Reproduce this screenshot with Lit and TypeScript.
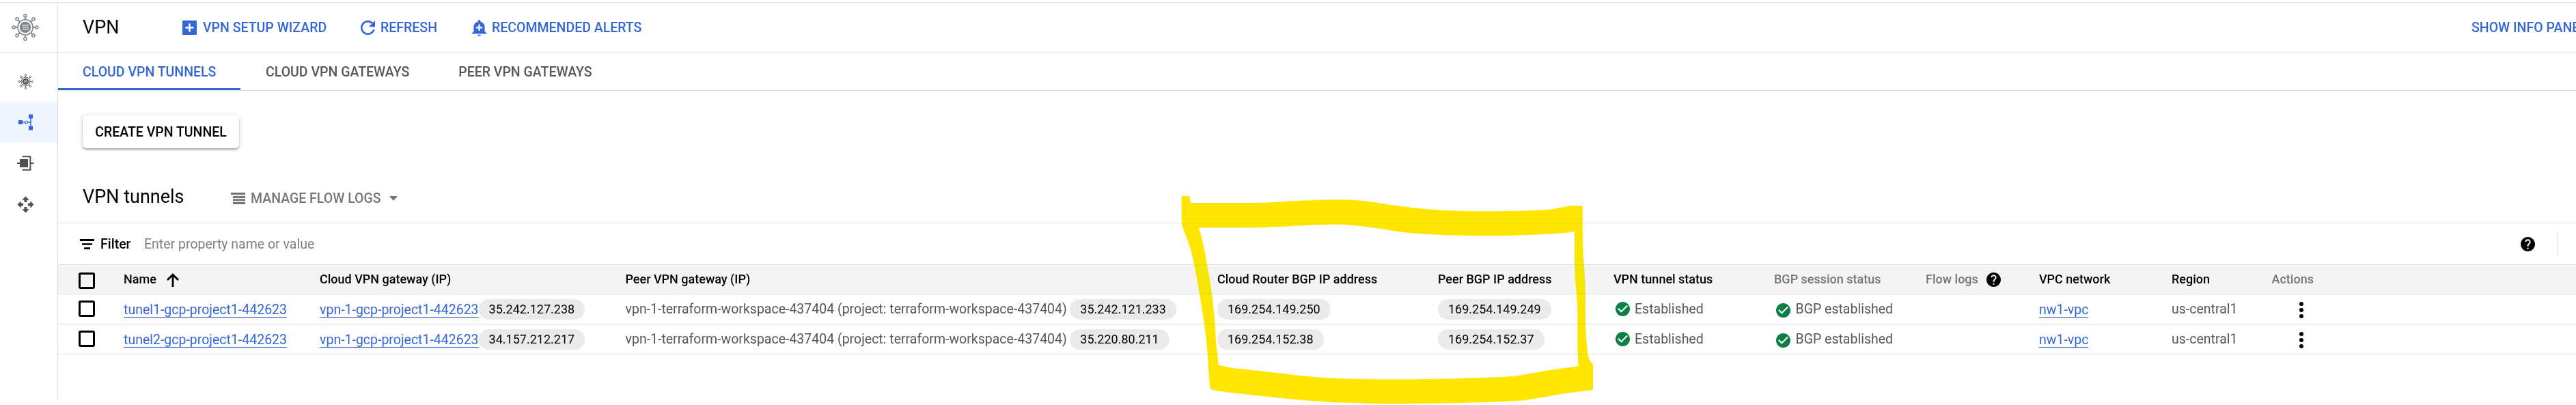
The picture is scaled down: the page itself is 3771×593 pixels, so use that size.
import { LitElement, html, css, svg } from "lit";
import { customElement } from "lit/decorators.js";

interface Tunnel {
  name: string;
  gateway: string;
  gatewayIp: string;
  peer: string;
  peerIp: string;
  routerBgp: string;
  peerBgp: string;
  network: string;
  region: string;
}

const PEER = "vpn-1-terraform-workspace-437404 (project: terraform-workspace-437404)";

const TUNNELS: Tunnel[] = [
  { name: "tunel1-gcp-project1-442623", gateway: "vpn-1-gcp-project1-442623", gatewayIp: "35.242.127.238", peer: PEER, peerIp: "35.242.121.233", routerBgp: "169.254.149.250", peerBgp: "169.254.149.249", network: "nw1-vpc", region: "us-central1" },
  { name: "tunel2-gcp-project1-442623", gateway: "vpn-1-gcp-project1-442623", gatewayIp: "34.157.212.217", peer: PEER, peerIp: "35.220.80.211", routerBgp: "169.254.152.38", peerBgp: "169.254.152.37", network: "nw1-vpc", region: "us-central1" },
];

const SPOKES = [0, 45, 90, 135, 180, 225, 270, 315];

const hub = (size: number) => html`<svg class="hub" width=${size} height=${size} viewBox="-20 -20 40 40">
  <circle r="11.2" fill="none" stroke="currentColor" stroke-width="1.6"/>
  <circle r="8.2" fill="currentColor"/>
  <path d="M-4.5 -3H5M-4.5 0H5M-4.5 3H5" stroke="#fff" stroke-width="1"/>
  ${SPOKES.map((a) => svg`<g transform=${`rotate(${a})`}><path d="M0 -11V-14.6" stroke="currentColor" stroke-width="1.8"/><circle cy="-16.9" r="2.1" fill="none" stroke="currentColor" stroke-width="1.5"/></g>`)}
</svg>`;

const tunnelIcon = html`<svg width="22" height="24" viewBox="0 0 22 24">
  <path d="M5 12H18M18 4V20" fill="none" stroke="currentColor" stroke-width="1.5"/>
  <path d="M0 9H6V15H0zM15 .5H21V6.5H15zM15 17.5H21V23.5H15z" fill="currentColor"/>
  <circle cx="11.5" cy="12" r="2" fill="#fff" stroke="currentColor" stroke-width="1.1"/>
</svg>`;

const gatewayIcon = html`<svg width="25" height="23" viewBox="0 0 25 23">
  <path d="M7.5 1.2H19.4V20.8H7.5M0 11H5M20 11H24.5" fill="none" stroke="currentColor" stroke-width="2"/>
  <path d="M4 5H16V17H4z" fill="currentColor"/>
</svg>`;

const moveIcon = html`<svg width="25" height="25" viewBox="-12.5 -12.5 25 25">
  ${[0, 90, 180, 270].map((a) => svg`<path transform=${`rotate(${a})`} fill="currentColor" d="M0 -12L5.3 -6.8H2V-3.4H-2V-6.8H-5.3z"/>`)}
</svg>`;

const addBox = html`<svg width="21" height="21" viewBox="3 3 18 18"><path fill="currentColor" d="M19.9 3H4.1C3.5 3 3 3.5 3 4.1v15.8c0 .6.5 1.1 1.1 1.1h15.8c.6 0 1.1-.5 1.1-1.1V4.1c0-.6-.5-1.1-1.1-1.1zM17.200 13.100h-4.100v4.100h-2.200v-4.100H6.800v-2.200h4.100V6.800h2.200v4.100h4.100v2.200z"/></svg>`;
const refresh = html`<svg width="21" height="21" viewBox="4 4 16 16"><path fill="currentColor" d="M17.650 6.350C16.200 4.900 14.210 4 12 4c-4.420 0-7.990 3.580-7.990 8s3.570 8 7.990 8c3.730 0 6.840-2.550 7.730-6h-2.080c-.820 2.330-3.040 4-5.650 4-3.310 0-6-2.690-6-6s2.690-6 6-6c1.660 0 3.140.690 4.220 1.780L13 11h7V4l-2.350 2.350z"/></svg>`;
const bell = html`<svg width="21" height="24" viewBox="3 2 18 21" preserveAspectRatio="none"><path fill="currentColor" d="M10.010 21.010c0 1.100.890 1.990 1.990 1.990s1.990-.890 1.990-1.990h-3.980zm8.870-4.190V11c0-3.250-2.250-5.970-5.290-6.690v-.720C13.590 2.710 12.880 2 12 2s-1.590.710-1.590 1.590v.720C7.370 5.030 5.120 7.750 5.120 11v5.820L3 18.940V20h18v-1.060l-2.120-2.120zM16 13.010h-3v3h-2v-3H8V11h3V8h2v3h3v2.010z"/></svg>`;
const logsIcon = html`<svg width="21" height="17" viewBox="0 0 21 17"><path fill="currentColor" d="M0 0H21V3.200H0zM3 5H21V8H3zM3 9.300H21V12.200H3zM3 14H21V17H3z"/></svg>`;
const filterIcon = html`<svg width="21" height="15" viewBox="0 0 21 15"><path fill="currentColor" d="M0 0H21V3H0zM3 6.200H18V8.800H3zM6.200 12.200H15V15H6.200z"/></svg>`;
const sortArrow = html`<svg class="sort" width="18" height="20" viewBox="0 0 18 20"><path fill="none" stroke="currentColor" stroke-width="2.800" d="M9 20V2.200M1 10L9 2L17 10"/></svg>`;
const check = html`<svg class="ok" width="21" height="21" viewBox="2 2 20 20"><path fill="currentColor" d="M12 2C6.480 2 2 6.480 2 12s4.480 10 10 10 10-4.480 10-10S17.520 2 12 2zm-2 15l-5-5 1.410-1.410L10 14.170l7.590-7.590L19 8l-9 9z"/></svg>`;
const help = html`<svg class="help" width="21" height="21" viewBox="2 2 20 20"><path fill="currentColor" d="M12 2C6.480 2 2 6.480 2 12s4.480 10 10 10 10-4.480 10-10S17.520 2 12 2zm1 17h-2v-2h2v2zm2.070-7.750l-.9.920C13.450 12.900 13 13.500 13 15h-2v-.5c0-1.100.450-2.100 1.170-2.830l1.240-1.260c.370-.360.590-.860.590-1.410 0-1.100-.9-2-2-2s-2 .9-2 2H8c0-2.210 1.790-4 4-4s4 1.790 4 4c0 .880-.360 1.680-.930 2.250z"/></svg>`;
const more = html`<svg class="more" width="6" height="24" viewBox="0 0 6 24"><circle cx="3" cy="3" r="3"/><circle cx="3" cy="12" r="3"/><circle cx="3" cy="21" r="3"/></svg>`;

@customElement("app-root")
class AppRoot extends LitElement {
  static styles = css`
    :host {
      display: block;
      position: relative;
      height: 593px;
      overflow: hidden;
      background: #fff;
      color: #000;
      font: 400 19.5px/24px Roboto, sans-serif;
      white-space: nowrap;
    }
    * { box-sizing: border-box; }
    svg { display: block; flex: none; }
    .frame { display: flex; height: 585px; padding-top: 3px; }
    .rail { flex: none; width: 85px; border-right: 1px solid #e0e0e0; border-top: 1px solid #e0e0e0; color: #505050; }
    .rail-head { height: 73px; border-bottom: 1px solid #e0e0e0; color: #80868b; display: flex; align-items: center; padding-left: 17px; margin-bottom: 12px; }
    .rail-item { height: 60px; display: flex; align-items: center; justify-content: center; padding-right: 9px; }
    .rail-item.on { background: #f0f5fe; color: #3367d6; }
    .main { flex: 1; min-width: 0; border-top: 1px solid #e0e0e0; }
    .bar { height: 74px; border-bottom: 1px solid #e0e0e0; padding-left: 36px; display: flex; align-items: center; color: #3367d6; font-weight: 500; }
    .bar h1, .section h2 { margin: 0; font-size: 27px; font-weight: 400; color: #000; line-height: 32px; }
    .bar h1 { width: 146px; padding-bottom: 1px; }
    .act { display: flex; align-items: center; gap: 9px; }
    .act.wizard { width: 261px; }
    .act.refresh { width: 163px; gap: 8px; }
    .act.alerts { gap: 8px; }
    .info { margin-left: auto; width: 153px; }
    .tabs { height: 55px; border-bottom: 1px solid #e0e0e0; display: flex; color: #575757; font-weight: 500; }
    .tab { padding: 2px 36px 0; display: flex; align-items: center; height: 54px; }
    .tab.on { color: #3367d6; border-bottom: 3px solid #3367d6; padding-top: 5px; width: 267px; margin-right: 1px; }
    .create { margin: 36px 0 0 36px; padding-top: 2px; height: 48px; width: 229px; border-radius: 5px; display: flex; align-items: center; justify-content: center; font-weight: 500; box-shadow: 0 2px 2px rgba(0,0,0,.26), 0 1px 7px rgba(0,0,0,.18); }
    .section { height: 110px; padding: 33px 0 0 36px; display: flex; align-items: center; border-bottom: 1px solid #e0e0e0; }
    .section h2 { width: 217px; }
    .flow { display: flex; align-items: center; gap: 8px; color: #757575; font-weight: 500; padding-top: 5px; }
    .caret { border: 6.500px solid transparent; border-top: 7px solid #757575; border-bottom: 0; margin-left: 4px; }
    .filter { height: 61px; border-bottom: 1px solid #e0e0e0; padding: 1px 0 0 32px; display: flex; align-items: center; }
    .filter b { font-weight: 500; width: 64px; margin-left: 9px; }
    .ph { color: #808080; }
    .filter .help { margin-left: auto; margin-right: 32px; }
    .rule { width: 1px; height: 36px; background: #e0e0e0; margin-right: 27px; margin-bottom: 1px; }
    .row { display: grid; grid-template-columns: 30px 66px 287px 447.500px 866.500px 323px 257px 235px 222px 166px 194px 146.500px 1fr; height: 44px; border-bottom: 1px solid #e0e0e0; align-items: center; color: #575757; }
    .row > div { display: flex; align-items: center; }
    .row.head { height: 43px; background: #f4f4f4; font-size: 18px; font-weight: 500; color: #000; padding-top: 0; }
    .head > .dim { color: #757575; }
    .box { width: 24px; height: 24px; border: 3px solid #000; border-radius: 3px; margin-top: -1px; }
    .head .box { margin-top: 4px; }
    .sort { margin-left: 15px; margin-top: 2px; }
    .head .help { margin-left: 12px; margin-top: 1px; color: #000; }
    a { color: #3367d6; line-height: 21px; border-bottom: 1px solid #3367d6; margin-top: 3px; }
    .chip { height: 30px; border-radius: 15px; background: #eaeaea; color: #000; font-size: 18px; line-height: 30px; padding: 0 15px; margin-top: 1px; }
    .peer .chip { margin-left: 4.500px; }
    .ok { color: #0b8043; margin: 0 7px 0 3px; }
    .ok-low .ok { margin: 4px 7.500px 0 3px; }
    .more { margin-left: 40px; margin-top: 3px; }
    .marker { position: absolute; left: 0; top: 0; mix-blend-mode: darken; pointer-events: none; }
  `;

  private row(t: Tunnel) {
    return html`<div class="row">
      <span></span>
      <div><span class="box"></span></div>
      <div><a>${t.name}</a></div>
      <div><a>${t.gateway}</a><span class="chip">${t.gatewayIp}</span></div>
      <div class="peer"><span>${t.peer}</span><span class="chip">${t.peerIp}</span></div>
      <div><span class="chip">${t.routerBgp}</span></div>
      <div><span class="chip">${t.peerBgp}</span></div>
      <div>${check}<span>Established</span></div>
      <div class="ok-low">${check}<span>BGP established</span></div>
      <div></div>
      <div><a>${t.network}</a></div>
      <div>${t.region}</div>
      <div>${more}</div>
    </div>`;
  }

  render() {
    return html`
      <div class="frame">
        <nav class="rail">
          <div class="rail-head">${hub(40)}</div>
          <div class="rail-item">${hub(23)}</div>
          <div class="rail-item on">${tunnelIcon}</div>
          <div class="rail-item">${gatewayIcon}</div>
          <div class="rail-item">${moveIcon}</div>
        </nav>
        <main class="main">
          <header class="bar">
            <h1>VPN</h1>
            <div class="act wizard">${addBox}<span>VPN SETUP WIZARD</span></div>
            <div class="act refresh">${refresh}<span>REFRESH</span></div>
            <div class="act alerts">${bell}<span>RECOMMENDED ALERTS</span></div>
            <div class="info">SHOW INFO PANEL</div>
          </header>
          <div class="tabs">
            <div class="tab on">CLOUD VPN TUNNELS</div>
            <div class="tab">CLOUD VPN GATEWAYS</div>
            <div class="tab">PEER VPN GATEWAYS</div>
          </div>
          <div class="create">CREATE VPN TUNNEL</div>
          <div class="section">
            <h2>VPN tunnels</h2>
            <div class="flow">${logsIcon}<span>MANAGE FLOW LOGS</span><i class="caret"></i></div>
          </div>
          <div class="filter">${filterIcon}<b>Filter</b><span class="ph">Enter property name or value</span>${help}<span class="rule"></span></div>
          <div class="row head">
            <span></span>
            <div><span class="box"></span></div>
            <div><span>Name</span>${sortArrow}</div>
            <div>Cloud VPN gateway (IP)</div>
            <div>Peer VPN gateway (IP)</div>
            <div>Cloud Router BGP IP address</div>
            <div>Peer BGP IP address</div>
            <div>VPN tunnel status</div>
            <div class="dim">BGP session status</div>
            <div class="dim"><span>Flow logs</span>${help}</div>
            <div>VPC network</div>
            <div>Region</div>
            <div class="dim">Actions</div>
          </div>
          ${TUNNELS.map((t) => this.row(t))}
        </main>
      </div>
      <svg class="marker" width="3771" height="593" viewBox="0 0 3771 593">
        <path fill="#ffe600" fill-rule="evenodd" d="M1729.700 287H1741L1743.300 297H1840C1880 296 1910 292.300 1960 292.300C2000 292 2030 300 2053 302.300C2090 307 2120 309.300 2170 309.300C2200 309.300 2240 308.700 2265 307C2283 305.500 2292 301.300 2302 301.300H2316.700C2317 340 2316.500 355 2319 390C2321 420 2321 430 2321 470C2321.500 490 2323 505 2324 516C2325 526 2328 529 2332 533V570.700L2286.700 576.700L2236.700 585.300C2225 588 2180 588.500 2136.700 590C2100 591 2060 591 2020 591C1990 590.500 1970 589.500 1950 589C1910 587 1880 583 1850 580.300L1800 574.700L1775 571Q1772 570 1771.700 568.300C1769 550 1769 535 1767.700 518.300C1766 490 1760 455 1756 430.300C1752 405 1748 385 1743.300 366.700C1740 352 1730 335 1729.700 323ZM1755 333.300H1830C1870 333 1920 328.700 1960 328.500C1985 329 2020 335.300 2063 341C2100 344 2130 345 2170 345C2200 345 2230 344.700 2260 343C2280 342 2290 341.500 2305 339C2305 375 2305 390 2306 410C2308 432 2309.300 445 2309.300 465C2309 490 2309.300 520 2310.700 536.300C2270 541 2240 547 2216.700 551C2180 553 2150 553.500 2136.700 554C2100 555.300 2060 555.300 2020 555.300C1990 555 1970 554.500 1950 553.700C1900 551 1850 543 1806.700 539.300L1788.300 535.700Q1784 534 1783.300 532.700C1783 520 1781 510 1780.300 503.300L1778.300 470L1775 436.700L1771.700 413.300L1767.700 391.700C1764 368 1760 350 1755 333.300Z"/>
      </svg>
    `;
  }
}
